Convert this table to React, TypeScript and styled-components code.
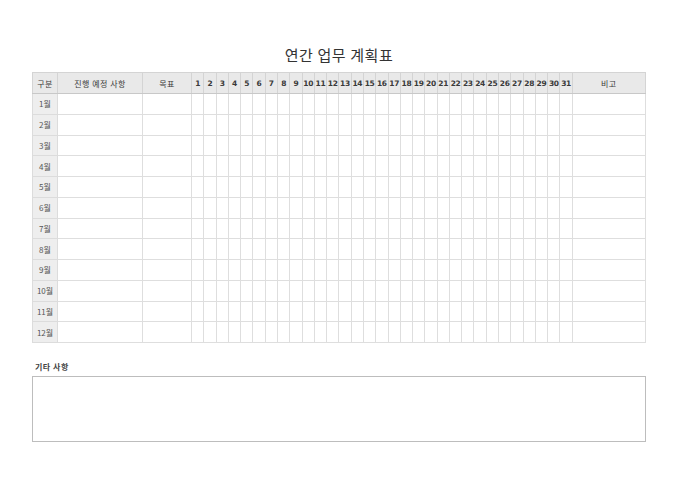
import React from "react";
import styled, {createGlobalStyle} from "styled-components";

const GlobalStyle = createGlobalStyle`
    html, body {
        margin: 0;
        padding: 0;
        background: #ffffff;
    }
    body {
        font-family: "Noto Sans CJK KR", "Noto Sans", sans-serif;
        color: #333;
    }
`;

const months = ["1월", "2월", "3월", "4월", "5월", "6월", "7월", "8월", "9월", "10월", "11월", "12월"];
const days = Array.from({length: 31}, (_, i) => i + 1);

const App: React.FC = () => {
    return <Page>
        <GlobalStyle/>
        <Title>연간 업무 계획표</Title>
        <PlanTable>
            <colgroup>
                <col style={{width: 25}}/>
                <col style={{width: 85}}/>
                <col style={{width: 49}}/>
                {days.map(d => <col key={d} style={{width: 12.29}}/>)}
                <col/>
            </colgroup>
            <thead>
            <HeadRow>
                <HeadCell>구분</HeadCell>
                <HeadCell>진행 예정 사항</HeadCell>
                <HeadCell>목표</HeadCell>
                {days.map(d => <DayCell key={d}>{d}</DayCell>)}
                <HeadCell>비고</HeadCell>
            </HeadRow>
            </thead>
            <tbody>
            {months.map(m => <BodyRow key={m}>
                <MonthCell>{m}</MonthCell>
                <Cell/>
                <Cell/>
                {days.map(d => <Cell key={d}/>)}
                <Cell/>
            </BodyRow>)}
            </tbody>
        </PlanTable>
        <NoteLabel>기타 사항</NoteLabel>
        <NoteBox/>
    </Page>
}

const Page = styled.div`
    width: 680px;
    height: 481px;
    box-sizing: border-box;
    padding: 44px 34px 0 32px;
`;

const Title = styled.div`
    text-align: center;
    font-size: 15px;
    line-height: 22px;
    height: 22px;
    margin-bottom: 6px;
    color: #333;
    letter-spacing: 0.6px;
`;

const PlanTable = styled.table`
    width: 614px;
    table-layout: fixed;
    border-collapse: collapse;
    border: 1px solid #b9b9b9;
`;

const HeadRow = styled.tr`
    height: 21px;
    background: #e9e9e9;
`;

const BodyRow = styled.tr`
    height: 20.75px;
`;

const HeadCell = styled.th`
    padding: 0;
    border: 1px solid #d4d4d4;
    border-bottom-color: #c8c8c8;
    font-size: 8px;
    font-weight: normal;
    color: #3a3a3a;
    text-align: center;
    letter-spacing: 0.5px;
    white-space: nowrap;
`;

const DayCell = styled(HeadCell)`
    font-weight: bold;
    letter-spacing: -0.3px;
    font-family: "DejaVu Sans", sans-serif;
    font-size: 7.5px;
`;

const MonthCell = styled.td`
    padding: 0;
    border: 1px solid #dcdcdc;
    background: #eeeeee;
    font-size: 8px;
    color: #555;
    text-align: center;
    white-space: nowrap;
`;

const Cell = styled.td`
    padding: 0;
    border: 1px solid #dedede;
    background: #ffffff;
`;

const NoteLabel = styled.div`
    margin-top: 18px;
    padding-left: 3px;
    font-size: 8px;
    line-height: 12px;
    font-weight: bold;
    color: #444;
    letter-spacing: 0.5px;
`;

const NoteBox = styled.div`
    margin-top: 3px;
    width: 614px;
    height: 66px;
    box-sizing: border-box;
    border: 1px solid #bdbdbd;
`;

export default App;
